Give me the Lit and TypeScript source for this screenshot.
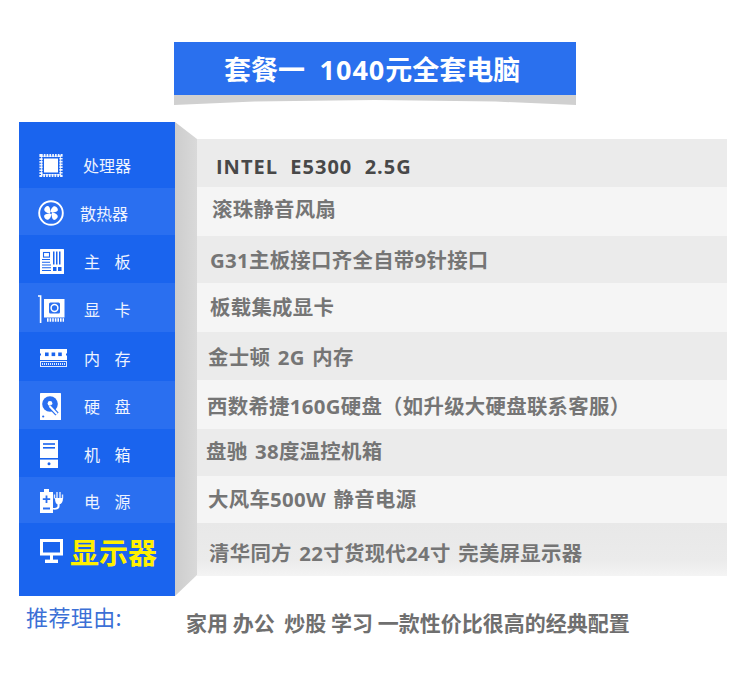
import { LitElement, html, css, svg } from "lit";
import { customElement } from "lit/decorators.js";

const icons: Record<string, unknown> = {
  cpu: html`<svg width="24" height="25" viewBox="0 0 24 25">
    <rect x="2" y="2.5" width="20" height="20" fill="none" stroke="#f2f6ff" stroke-width="3.2" stroke-dasharray="1.7 1.1"/>
    <rect x="2.7" y="3.2" width="18.6" height="18.6" fill="none" stroke="#fff" stroke-width="0.8"/>
    <rect x="5" y="5.5" width="14" height="14" fill="#fff"/>
  </svg>`,
  fan: html`<svg width="26" height="26" viewBox="0 0 26 26">
    <circle cx="13" cy="13" r="11.8" fill="none" stroke="#fff" stroke-width="1.9"/>
    ${[45, 135, 225, 315].map(
      (a) => svg`<path transform="rotate(${a} 13 13)" d="M13 13C10.2 11.5 9.4 8 10.4 6C11.8 4.4 15 4.6 16 6.4C16.6 8.4 14.6 9.8 13 13Z" fill="#fff"/>`
    )}
    <circle cx="13" cy="13" r="1" fill="#2a6ff0"/>
  </svg>`,
  board: html`<svg width="24" height="25" viewBox="0 0 24 25">
    <rect x="0" y="0" width="24" height="25" rx="0.5" fill="#fff"/>
    <g fill="none" stroke="#1a64ee" stroke-width="1.1">
      <rect x="3.5" y="3.5" width="6" height="4.6"/>
      <path d="M2 10.5H10M2 13.2H10M2 16H11M2 18.8H11M2 21.5H11"/>
    </g>
    <g fill="#1a64ee">
      <rect x="13" y="2.5" width="1.5" height="13"/>
      <rect x="16" y="2.5" width="1.5" height="13"/>
      <rect x="19" y="2.5" width="1.5" height="13"/>
      <rect x="13" y="18" width="3.5" height="4"/>
      <rect x="18" y="18" width="3.5" height="4"/>
    </g>
  </svg>`,
  gpu: html`<svg width="27" height="28" viewBox="0 0 27 28">
    <path d="M0 1H2.6V28" fill="none" stroke="#fff" stroke-width="1.6"/>
    <rect x="6" y="4" width="20.5" height="18.5" fill="#fff"/>
    <rect x="11" y="7.5" width="11" height="11" rx="1.5" fill="#2a6ff0"/>
    <circle cx="16.5" cy="13" r="3.4" fill="none" stroke="#fff" stroke-width="1.5"/>
    <path d="M9 25H26" stroke="#fff" stroke-width="3.4" stroke-dasharray="1.6 1"/>
  </svg>`,
  ram: html`<svg width="27" height="18" viewBox="0 0 27 18">
    <path d="M0 0H27V4.5H26V6.5H27V11H0V6.5H1V4.5H0Z" fill="#fff"/>
    <rect x="5" y="3.5" width="3.6" height="3.6" fill="#1a64ee"/>
    <rect x="11.6" y="3.5" width="3.6" height="3.6" fill="#1a64ee"/>
    <rect x="18.2" y="3.5" width="3.6" height="3.6" fill="#1a64ee"/>
    <rect x="0.5" y="12.5" width="26" height="5" fill="none" stroke="#dfe9ff" stroke-width="1"/>
    <path d="M2 15H25" stroke="#dfe9ff" stroke-width="2" stroke-dasharray="1 1"/>
  </svg>`,
  hdd: html`<svg width="21" height="27" viewBox="0 0 21 27">
    <rect width="21" height="27" rx="0.6" fill="#fff"/>
    <circle cx="10" cy="11" r="7.8" fill="#2a6ff0"/>
    <circle cx="10" cy="10.5" r="2.4" fill="#fff"/>
    <path d="M9.5 13L17 21" stroke="#2a6ff0" stroke-width="4.4"/>
    <path d="M9.5 13L17 21" stroke="#fff" stroke-width="2"/>
    <circle cx="3.2" cy="23.5" r="1.1" fill="#2a6ff0"/>
  </svg>`,
  box: html`<svg width="18" height="28" viewBox="0 0 18 28">
    <rect width="18" height="18" fill="#fff"/>
    <rect y="19.6" width="18" height="8.4" fill="#fff"/>
    <rect x="3" y="3.2" width="12" height="1.6" fill="#1a64ee"/>
    <rect x="3" y="7" width="12" height="1.6" fill="#1a64ee"/>
    <circle cx="9" cy="23.8" r="1.5" fill="#1a64ee"/>
  </svg>`,
  psu: html`<svg width="24" height="24" viewBox="0 0 24 24">
    <path d="M0 3H4V0H9V3H13V24H0Z" fill="#fff"/>
    <path d="M6.5 6.5V14M2.8 10.2H10.2M3 19.5H10" stroke="#2a6ff0" stroke-width="1.8" fill="none"/>
    <path d="M14.5 5.5V9.5M17 3V9.5M20 3V9.5M22.5 5.5V9.5" stroke="#dfe9ff" stroke-width="1.4" fill="none"/>
    <path d="M15 9H23C23 13 21.5 15 19.6 15.2V17C19.6 20 17 21 13 20.6V19C16 19 17.5 18.6 17.5 17V15.2C16 15 15 13 15 9Z" fill="#fff"/>
  </svg>`,
  screen: html`<svg width="23" height="24" viewBox="0 0 23 24">
    <rect x="1.5" y="1.5" width="20" height="13.5" fill="none" stroke="#fff" stroke-width="3"/>
    <rect x="10" y="16" width="3" height="5" fill="#fff"/>
    <rect x="5" y="20.6" width="13" height="3.4" fill="#fff"/>
  </svg>`,
};

const rows = [
  { icon: "cpu", iconX: 39, labelX: 83, label: "处理器", h: 66, light: false, pad: 20 },
  { icon: "fan", iconX: 38, labelX: 80, label: "散热器", h: 47, light: true, pad: 2 },
  { icon: "board", iconX: 40, labelX: 84, label: "主 板", h: 48, light: false, pad: 4 },
  { icon: "gpu", iconX: 38, labelX: 84, label: "显 卡", h: 49, light: true, pad: 2 },
  { icon: "ram", iconX: 40, labelX: 84, label: "内 存", h: 49, light: false, pad: 2 },
  { icon: "hdd", iconX: 40, labelX: 84, label: "硬 盘", h: 48, light: true, pad: 2 },
  { icon: "box", iconX: 40, labelX: 84, label: "机 箱", h: 48, light: false, pad: 1 },
  { icon: "psu", iconX: 40, labelX: 84, label: "电 源", h: 46, light: true, pad: 1 },
];

const specs = [
  { text: "INTEL  E5300  2.5G", x: 216, h: 48, dy: 3, light: false, top: true },
  { text: "滚珠静音风扇", x: 212, h: 49, dy: -4, light: true },
  { text: "G31主板接口齐全自带9针接口", x: 210, h: 47, dy: -1, light: false },
  { text: "板载集成显卡", x: 210, h: 49, dy: -2, light: true },
  { text: "金士顿 2G 内存", x: 208, h: 48, dy: 0, light: false },
  { text: "西数希捷160G硬盘（如升级大硬盘联系客服）", x: 207, h: 49, dy: 0, light: true },
  { text: "盘驰 38度温控机箱", x: 206, h: 47, dy: -3, light: false },
  { text: "大风车500W 静音电源", x: 208, h: 47, dy: -2, light: true },
  { text: "清华同方 22寸货现代24寸 完美屏显示器", x: 209, h: 53, dy: 2, light: false, last: true },
];

@customElement("app-root")
export class AppRoot extends LitElement {
  static styles = css`
    :host {
      display: block;
      width: 750px;
      height: 680px;
      background: #fff;
      overflow: hidden;
      font-family: "Noto Sans CJK SC", "Open Sans", sans-serif;
    }
    .title {
      position: relative;
      box-sizing: border-box;
      width: 402px;
      height: 53px;
      margin: 42px 0 27px 174px;
      background: #2a70ee;
      color: #fff;
      font-size: 27px;
      font-weight: 700;
      line-height: 53px;
      padding-left: 50px;
      white-space: pre;
      word-spacing: -1.3px;
    }
    .title::after {
      content: "";
      position: absolute;
      left: 0;
      right: 0;
      top: 100%;
      height: 10px;
      background: #d0d0d0;
      clip-path: polygon(0 0, 100% 0, 100% 100%, 80% 65%, 50% 50%, 20% 65%, 0 100%);
    }
    .title b {
      font-family: "Open Sans", "Noto Sans CJK SC", sans-serif;
      font-weight: 700;
      letter-spacing: 1px;
    }
    .main {
      display: flex;
      margin-left: 19px;
      height: 474px;
    }
    .panel {
      width: 156px;
      background: #1a64ee;
      display: flex;
      flex-direction: column;
      flex: none;
    }
    .side {
      display: flex;
      align-items: center;
      box-sizing: border-box;
      color: #fff;
      font-size: 16px;
      word-spacing: 11px;
      line-height: 24px;
    }
    .side.light {
      background: #2a6ff0;
    }
    .slot {
      box-sizing: border-box;
      flex: none;
      display: flex;
      align-items: center;
    }
    .slot svg {
      display: block;
    }
    .label {
      color: #eef3ff;
      white-space: nowrap;
    }
    .side.final {
      flex: 1;
      padding-bottom: 18px;
    }
    .big {
      color: #fff000;
      font-size: 29px;
      font-weight: 700;
      line-height: 38px;
      word-spacing: 0;
    }
    .fold {
      width: 22px;
      flex: none;
      background: linear-gradient(90deg, #cdcdcd, #d9d9d9);
      clip-path: polygon(0 0, 100% 17px, 100% 453px, 0 100%);
    }
    .specs {
      width: 530px;
      margin-top: 17px;
      display: flex;
      flex-direction: column;
    }
    .spec {
      box-sizing: border-box;
      display: flex;
      align-items: center;
      background: #ebebeb;
      color: #757575;
      font-size: 20.4px;
      font-weight: 700;
      letter-spacing: 0.3px;
      word-spacing: 2px;
      white-space: pre;
    }
    .spec.light {
      background: #f5f5f5;
    }
    .spec.top {
      color: #484848;
      font-size: 20px;
      letter-spacing: 1px;
      word-spacing: 0;
    }
    .spec.last {
      background: linear-gradient(180deg, #e8e8e8, #ebebeb 70%, #f4f4f4);
    }
    .spec span {
      font-family: "Open Sans", "Noto Sans CJK SC", sans-serif;
    }
    .foot {
      display: flex;
      align-items: baseline;
      margin: 4px 0 0 26px;
      white-space: pre;
    }
    .why {
      color: #3c70d6;
      font-size: 22px;
      width: 160px;
      flex: none;
      letter-spacing: 0.4px;
    }
    .reason {
      color: #6f6f6f;
      font-size: 21px;
      font-weight: 700;
      position: relative;
      top: 5px;
    }
  `;

  render() {
    return html`
      <div class="title">套餐一   <b>1040</b>元全套电脑</div>
      <div class="main">
        <div class="panel">
          ${rows.map(
            (r) => html`<div
              class="side ${r.light ? "light" : ""}"
              style="height:${r.h}px;padding-top:${r.pad}px"
            >
              <div class="slot" style="width:${r.labelX - 19}px;padding-left:${r.iconX - 19}px">
                ${icons[r.icon]}
              </div>
              <div class="label">${r.label}</div>
            </div>`
          )}
          <div class="side final">
            <div class="slot" style="width:${70 - 19}px;padding-left:${40 - 19}px">${icons.screen}</div>
            <div class="big">显示器</div>
          </div>
        </div>
        <div class="fold"></div>
        <div class="specs">
          ${specs.map(
            (s) => html`<div
              class="spec ${s.light ? "light" : ""} ${s.top ? "top" : ""} ${s.last ? "last" : ""}"
              style="height:${s.h}px;padding-left:${s.x - 197}px;padding-top:${Math.max(s.dy, 0) * 2}px;padding-bottom:${Math.max(-s.dy, 0) * 2}px"
            >
              <span>${s.text}</span>
            </div>`
          )}
        </div>
      </div>
      <div class="foot">
        <div class="why">推荐理由:</div>
        <div class="reason">家用 办公  炒股 学习 一款性价比很高的经典配置</div>
      </div>
    `;
  }
}
